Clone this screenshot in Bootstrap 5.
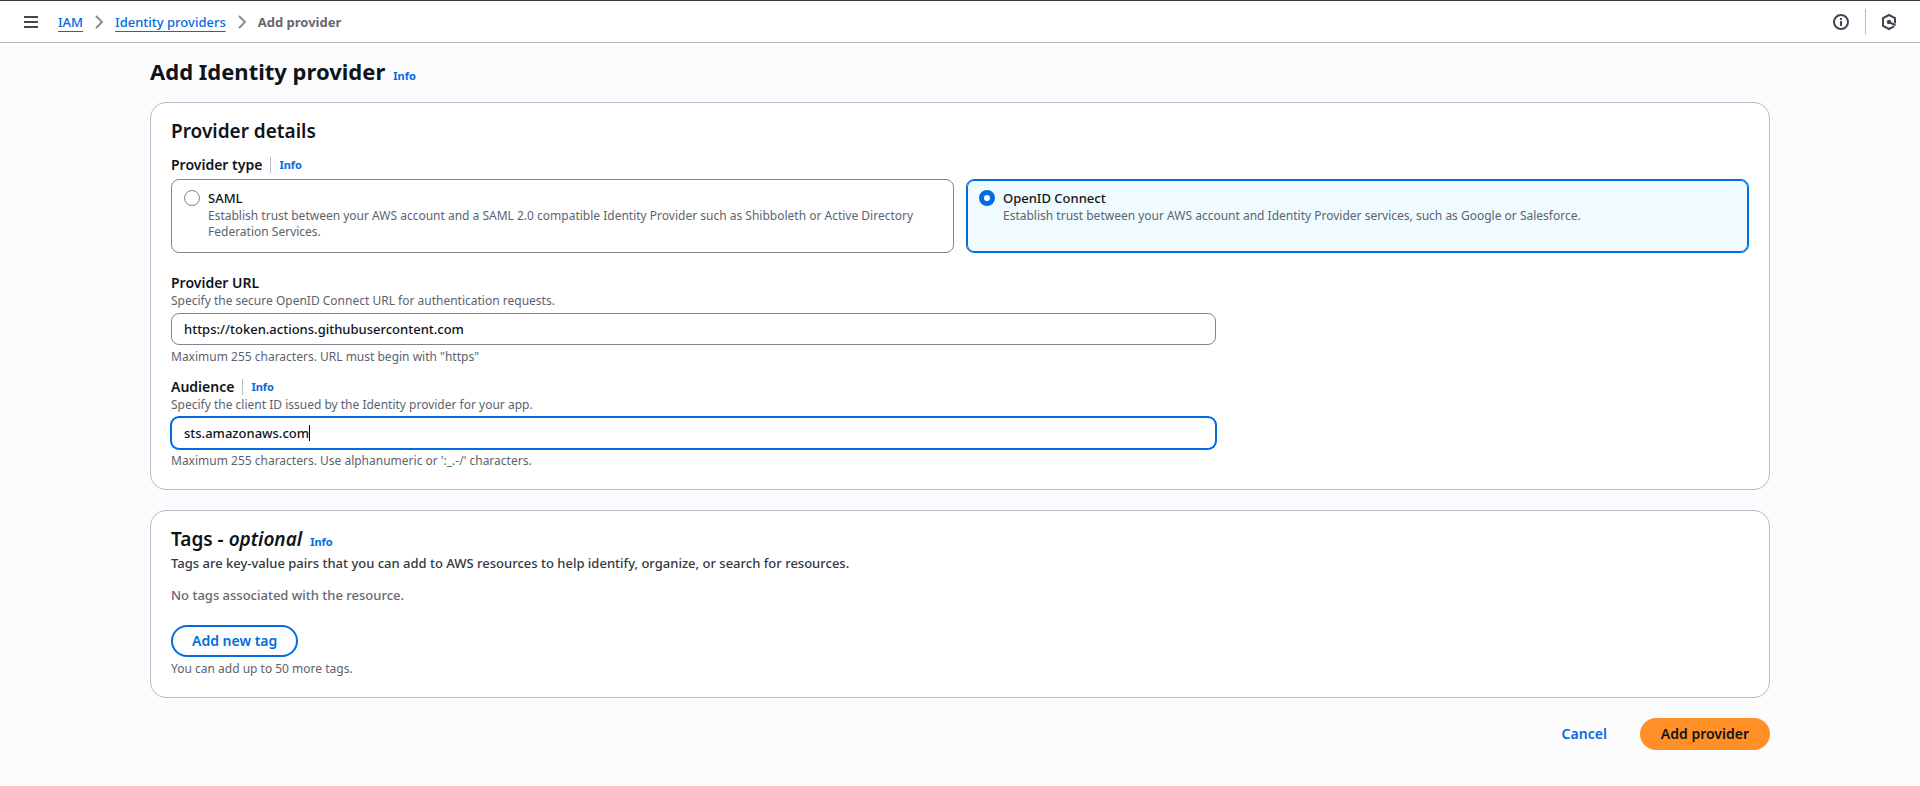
<!DOCTYPE html>
<html lang="en">
<head>
<meta charset="utf-8">
<meta name="viewport" content="width=device-width, initial-scale=1">
<title>Add Identity provider | IAM</title>
<link href="https://cdn.jsdelivr.net/npm/bootstrap@5.3.0/dist/css/bootstrap.min.css" rel="stylesheet">
<style>
  :root { --link: #006ce0; --ink: #0f141a; --muted-ink: #5c636e; --line: #b6bec9; --control: #7d8593; }
  body { font: 500 13px/20px "Noto Sans", "Open Sans", sans-serif; color: var(--ink); background: #fcfcff; }
  a { color: var(--link); }
  .topbar { height: 43px; background: #fff; border-top: 1px solid #333843; border-bottom: 1px solid #b9b9bd; padding: 0 23px; }
  .topbar-rule { width: 1px; height: 25px; margin: 0 15px; background: #b9b9bd; }
  .icon-btn { background: none; border: 0; padding: 0; line-height: 0; color: #424650; }
  .crumbs { margin-left: 19px; }
  .crumbs ol { gap: 11px; }
  .crumbs a { text-decoration: underline; text-decoration-thickness: 1px; text-underline-offset: 4px; }
  .crumbs .here { font-weight: 700; color: #656871; }
  .page { width: 84.375%; margin: 0 auto; padding: 13px 0 36px; }
  h1 { font-size: 22px; line-height: 30px; font-weight: 700; margin: 0; }
  h2 { font-size: 19px; line-height: 24px; font-weight: 600; margin: 0; }
  .info { font-size: 11px; font-weight: 700; line-height: 16px; text-decoration: none; }
  .stack { gap: 20px; }
  .panel { background: #fff; border: 1px solid var(--line); border-radius: 16px; padding: 16px 20px 20px; }
  .caption { font-size: 14px; line-height: 20px; font-weight: 600; }
  .rule { width: 1px; height: 16px; background: var(--line); }
  .hint { font-size: 12px; line-height: 16px; font-weight: 400; color: var(--muted-ink); }
  .tiles { --bs-gutter-x: 12px; margin-bottom: 20px; }
  .tile { border: 1px solid var(--control); border-radius: 8px; padding: 8px 12px 12px; gap: 8px; cursor: pointer; }
  .tile.on { border-color: var(--link); box-shadow: inset 0 0 0 1px var(--link); background: #f0fbff; }
  .tile input { appearance: none; flex: none; width: 16px; height: 16px; margin: 2px 0 0; border: 1px solid var(--control); border-radius: 50%; background: #fff; }
  .tile input:checked { border: 5px solid var(--link); }
  .gutter { --bs-gutter-x: 20px; }
  .field { height: 32px; padding: 4px 12px; font: inherit; color: var(--ink); border: 1px solid var(--control); border-radius: 8px; }
  .field:focus { border-color: var(--link); box-shadow: 0 0 0 1px var(--link); color: var(--ink); caret-color: transparent; }
  .caret { display: none; position: absolute; left: 138px; top: 8px; width: 1px; height: 16px; background: #000; }
  .field:focus + .caret { display: block; }
  .tags-about { margin: 2px 0 12px; color: #333843; }
  .tags-none { margin: 0 0 20px; color: #656871; }
  .pill { height: 32px; padding: 4px 19px; border: 2px solid transparent; border-radius: 20px; font-size: 14px; line-height: 20px; font-weight: 600; }
  .pill-outline { color: var(--link); border-color: var(--link); background: #fff; }
  .pill-plain { color: var(--link); }
  .pill-main { color: var(--ink); background: #ff8f26; }
  .actions { gap: 12px; }
</style>
</head>
<body>
<header class="topbar d-flex align-items-center">
  <button class="icon-btn" type="button" aria-label="Open navigation">
    <svg width="16" height="16" viewBox="0 0 16 16" stroke="currentColor" stroke-width="2"><path d="M1 3h14M1 8h14M1 13h14"/></svg>
  </button>
  <nav class="crumbs" aria-label="Breadcrumb">
    <ol class="list-unstyled d-flex align-items-center m-0">
      <li><a href="#">IAM</a></li>
      <li aria-hidden="true" class="d-flex"><svg width="10" height="16" viewBox="0 0 10 16" fill="none" stroke="#8c8c94" stroke-width="2"><path d="M2 2l6 6-6 6"/></svg></li>
      <li><a href="#">Identity providers</a></li>
      <li aria-hidden="true" class="d-flex"><svg width="10" height="16" viewBox="0 0 10 16" fill="none" stroke="#8c8c94" stroke-width="2"><path d="M2 2l6 6-6 6"/></svg></li>
      <li class="here" aria-current="page">Add provider</li>
    </ol>
  </nav>
  <div class="d-flex align-items-center ms-auto">
    <button class="icon-btn" type="button" aria-label="Help">
      <svg width="18" height="18" viewBox="0 0 18 18" fill="none" stroke="currentColor" stroke-width="2"><circle cx="9" cy="9" r="7"/><path d="M9 5v2M9 8v5"/><path d="M8 8.500h1" stroke-width="1"/></svg>
    </button>
    <span class="topbar-rule"></span>
    <button class="icon-btn" type="button" aria-label="Diagnostics">
      <svg width="16" height="18" viewBox="0 0 16 18" fill="none" stroke="currentColor" stroke-width="2"><path d="M14 10.500V5.200L8 2 2 5.200v7.600L8 16l5-2.700"/><circle cx="8" cy="9" r="2.200" fill="currentColor" stroke="none"/><path d="M8 9l6.500 3.300"/></svg>
    </button>
  </div>
</header>

<main class="page">
  <div class="d-flex align-items-baseline gap-2 mb-3">
    <h1>Add Identity provider</h1>
    <a class="info" href="#">Info</a>
  </div>

  <form class="stack d-flex flex-column">
    <section class="panel">
      <h2>Provider details</h2>
      <div class="d-flex align-items-center gap-2 mt-2 pt-1">
        <span class="caption" id="type-label">Provider type</span><span class="rule"></span><a class="info" href="#">Info</a>
      </div>
      <div class="row tiles mt-1" role="radiogroup" aria-labelledby="type-label">
        <div class="col-6">
          <label class="tile d-flex h-100" for="saml">
            <input type="radio" name="type" id="saml">
            <span><span class="d-block">SAML</span><span class="hint d-block">Establish trust between your AWS account and a SAML 2.0 compatible Identity Provider such as Shibboleth or Active Directory Federation Services.</span></span>
          </label>
        </div>
        <div class="col-6">
          <label class="tile on d-flex h-100" for="oidc">
            <input type="radio" name="type" id="oidc" checked>
            <span><span class="d-block">OpenID Connect</span><span class="hint d-block">Establish trust between your AWS account and Identity Provider services, such as Google or Salesforce.</span></span>
          </label>
        </div>
      </div>
      <div class="row gutter">
        <div class="col-8">
          <label class="caption d-block" for="url">Provider URL</label>
          <div class="hint">Specify the secure OpenID Connect URL for authentication requests.</div>
          <input class="form-control field my-1" id="url" type="text" value="https://token.actions.githubusercontent.com">
          <div class="hint">Maximum 255 characters. URL must begin with "https"</div>
        </div>
      </div>
      <div class="row gutter mt-2 pt-1">
        <div class="col-8">
          <div class="d-flex align-items-center gap-2">
            <label class="caption" for="aud">Audience</label><span class="rule"></span><a class="info" href="#">Info</a>
          </div>
          <div class="hint">Specify the client ID issued by the Identity provider for your app.</div>
          <div class="position-relative my-1">
            <input class="form-control field" id="aud" type="text" value="sts.amazonaws.com" autofocus>
            <span class="caret"></span>
          </div>
          <div class="hint">Maximum 255 characters. Use alphanumeric or ':_.-/' characters.</div>
        </div>
      </div>
    </section>

    <section class="panel">
      <div class="d-flex align-items-baseline gap-2">
        <h2>Tags - <em>optional</em></h2>
        <a class="info" href="#">Info</a>
      </div>
      <p class="tags-about">Tags are key-value pairs that you can add to AWS resources to help identify, organize, or search for resources.</p>
      <p class="tags-none">No tags associated with the resource.</p>
      <button class="btn pill pill-outline" type="button">Add new tag</button>
      <div class="hint mt-1">You can add up to 50 more tags.</div>
    </section>

    <div class="actions d-flex justify-content-end">
      <button class="btn pill pill-plain" type="button">Cancel</button>
      <button class="btn pill pill-main" type="submit">Add provider</button>
    </div>
  </form>
</main>
<script src="https://cdn.jsdelivr.net/npm/bootstrap@5.3.0/dist/js/bootstrap.bundle.min.js"></script>
</body>
</html>
